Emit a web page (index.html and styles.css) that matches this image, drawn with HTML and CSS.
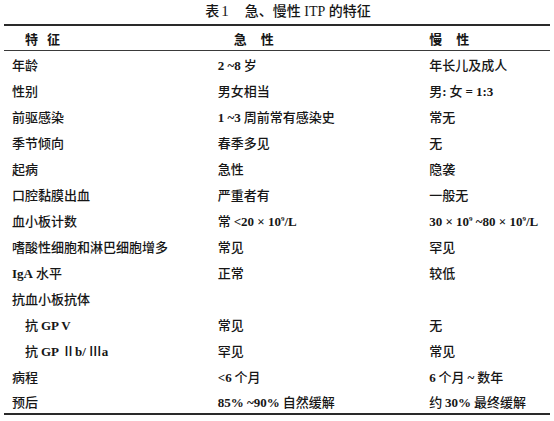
FILE: index.html
```html
<!DOCTYPE html>
<html lang="zh-CN">
<head>
<meta charset="utf-8">
<title>表1 急、慢性ITP的特征</title>
<link rel="stylesheet" href="styles.css">
</head>
<body>
<div class="page">
  <div class="caption">表<span class="num">1</span><span class="capgap"></span>急、慢性 <span class="lat">ITP</span> 的特征</div>
  <table class="itp">
    <thead>
      <tr>
        <th class="c1"><span class="h1">特征</span></th>
        <th class="c2"><span class="h2">急性</span></th>
        <th class="c3"><span class="h2">慢性</span></th>
      </tr>
    </thead>
    <tbody>
      <tr><td class="c1">年龄</td><td class="c2"><span class="lat">2 ~8</span> 岁</td><td class="c3">年长儿及成人</td></tr>
      <tr><td class="c1">性别</td><td class="c2">男女相当</td><td class="c3">男<span class="lat">:</span> 女 <span class="lat">= 1:3</span></td></tr>
      <tr><td class="c1">前驱感染</td><td class="c2"><span class="lat">1 ~3</span> 周前常有感染史</td><td class="c3">常无</td></tr>
      <tr><td class="c1">季节倾向</td><td class="c2">春季多见</td><td class="c3">无</td></tr>
      <tr><td class="c1">起病</td><td class="c2">急性</td><td class="c3">隐袭</td></tr>
      <tr><td class="c1">口腔黏膜出血</td><td class="c2">严重者有</td><td class="c3">一般无</td></tr>
      <tr><td class="c1">血小板计数</td><td class="c2">常 <span class="lat">&lt;20 × 10<sup>9</sup>/L</span></td><td class="c3"><span class="lat">30 × 10<sup>9</sup> ~80 × 10<sup>9</sup>/L</span></td></tr>
      <tr><td class="c1">嗜酸性细胞和淋巴细胞增多</td><td class="c2">常见</td><td class="c3">罕见</td></tr>
      <tr><td class="c1"><span class="lat">IgA</span> 水平</td><td class="c2">正常</td><td class="c3">较低</td></tr>
      <tr><td class="c1">抗血小板抗体</td><td class="c2"></td><td class="c3"></td></tr>
      <tr><td class="c1 sub">抗 <span class="lat">GP V</span></td><td class="c2">常见</td><td class="c3">无</td></tr>
      <tr><td class="c1 sub">抗 <span class="lat">GP</span> Ⅱ<span class="lat">b/</span> Ⅲ<span class="lat">a</span></td><td class="c2">罕见</td><td class="c3">常见</td></tr>
      <tr><td class="c1">病程</td><td class="c2"><span class="lat">&lt;6</span> 个月</td><td class="c3"><span class="lat">6</span> 个月 <span class="lat">~</span> 数年</td></tr>
      <tr><td class="c1">预后</td><td class="c2"><span class="lat">85% ~90%</span> 自然缓解</td><td class="c3">约 <span class="lat">30%</span> 最终缓解</td></tr>
    </tbody>
  </table>
</div>
</body>
</html>
```
FILE: styles.css
```css
html, body {
  margin: 0;
  padding: 0;
  background: #ffffff;
}

body {
  font-family: "Liberation Serif", "Noto Sans CJK SC", serif;
  color: #161616;
}

.page {
  width: 554px;
  height: 421px;
  overflow: hidden;
}

.caption {
  height: 24px;
  line-height: 23px;
  padding-left: 22px;
  text-align: center;
  font-size: 14px;
  font-weight: 500;
  font-family: "Liberation Serif", "Noto Sans CJK SC", serif;
}

.caption .num {
  font-family: "Liberation Serif", serif;
  font-size: 15px;
  margin-left: 2px;
}

.caption .lat {
  font-size: 14px;
  font-weight: normal;
}

.capgap {
  display: inline-block;
  width: 16px;
}

.lat {
  font-family: "Liberation Serif", serif;
  font-size: 13px;
  font-weight: bold;
}

sup {
  font-size: 7px;
  line-height: 0;
  vertical-align: 5px;
}

.itp {
  width: 546px;
  margin-left: 4px;
  border-collapse: collapse;
  border-top: 2px solid #2a2a2a;
  border-bottom: 2px solid #2a2a2a;
  font-size: 13px;
  font-weight: 500;
  font-family: "Noto Sans CJK SC", "Liberation Serif", serif;
}

.itp th {
  height: 24px;
  padding: 0;
  text-align: left;
  font-weight: 700;
  border-bottom: 1px solid #3a3a3a;
  vertical-align: middle;
}

.itp td {
  height: 26px;
  padding: 0;
  vertical-align: middle;
  white-space: nowrap;
}

.itp tbody tr:last-child td {
  height: 24px;
}

.itp .c1 { width: 202px; padding-left: 8px; }
.itp .c2 { width: 213px; }
.itp .c3 { width: 123px; }

.itp th.c1 { padding-left: 21px; }
.itp th.c2 { padding-left: 16px; }

.h1 { letter-spacing: 9px; }
.h2 { letter-spacing: 14px; }

.itp td.sub { padding-left: 21px; }
```
